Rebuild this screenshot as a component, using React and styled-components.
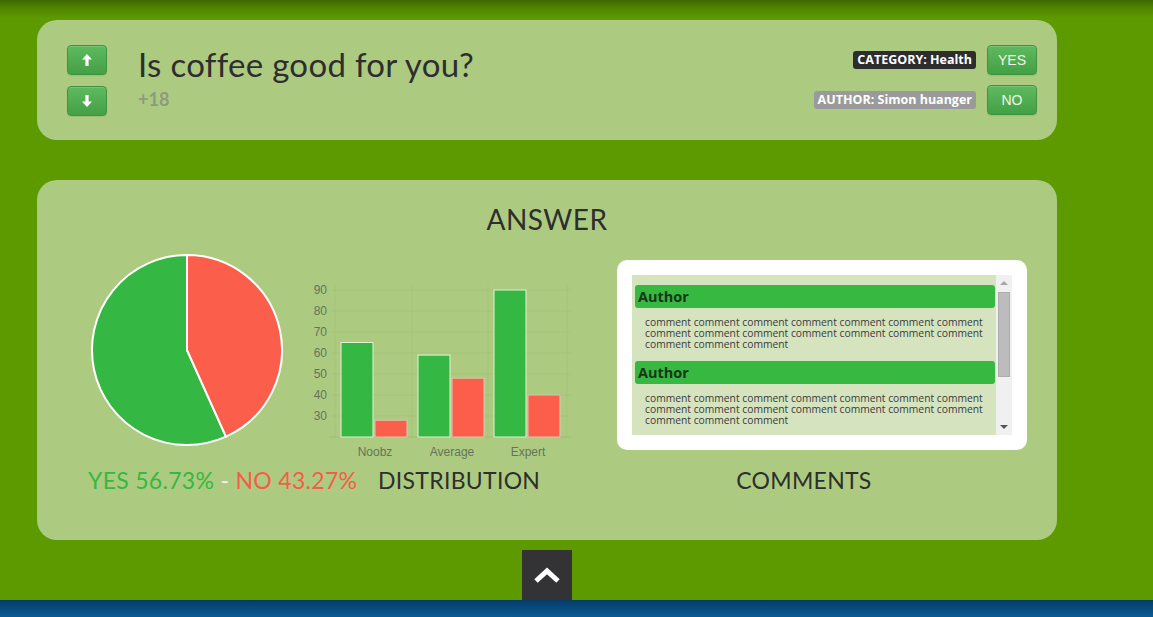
import React from 'react';
import styled, { createGlobalStyle } from 'styled-components';

const GlobalStyle = createGlobalStyle`
  html, body {
    margin: 0;
    padding: 0;
  }
  body {
    background: linear-gradient(#3e6600 0, #4f8400 8px, #5c9a00 18px, #5c9a00 100%);
    font-family: "Lato", "Open Sans", sans-serif;
    color: #333;
  }
`;

const Page = styled.div`
  display: flex;
  flex-direction: column;
  min-height: 617px;
`;

const Main = styled.div`
  width: 1020px;
  margin-left: 37px;
  padding-top: 20px;
  display: flex;
  flex-direction: column;
  gap: 40px;
`;

const Panel = styled.section`
  background: #adcb80;
  border-radius: 20px;
  box-sizing: border-box;
`;

const QuestionPanel = styled(Panel)`
  height: 120px;
  display: flex;
  align-items: flex-start;
  padding: 25px 20px 0 30px;
`;

const VoteColumn = styled.div`
  display: flex;
  flex-direction: column;
  gap: 11px;
`;

const GreenButton = styled.button`
  width: ${(p) => p.$w || 40}px;
  height: 30px;
  padding: 0;
  border: 1px solid #3f9340;
  border-radius: 4px;
  background: linear-gradient(#5fba5f, #44a044);
  box-shadow: inset 0 1px 0 rgba(255, 255, 255, 0.15), 0 1px 1px rgba(0, 0, 0, 0.08);
  color: #eef7e8;
  font-family: "Liberation Sans", Arial, sans-serif;
  font-size: 14px;
  display: flex;
  align-items: center;
  justify-content: center;
  cursor: pointer;
`;

const TitleBlock = styled.div`
  margin-left: 31px;
  flex: 1;
`;

const Title = styled.h1`
  margin: 0;
  margin-top: -1px;
  font-family: "Lato", sans-serif;
  font-weight: 400;
  font-size: 33px;
  line-height: 40px;
  color: #2e2e2e;
  letter-spacing: 0.3px;
`;

const Score = styled.div`
  margin-top: 4px;
  font-family: "Lato", sans-serif;
  font-weight: 700;
  font-size: 18px;
  color: #8c9b7c;
`;

const MetaColumn = styled.div`
  display: flex;
  flex-direction: column;
  align-items: flex-end;
  gap: 10px;
`;

const MetaRow = styled.div`
  display: flex;
  align-items: center;
  gap: 11px;
`;

const Label = styled.span`
  background: ${(p) => p.$bg};
  color: #fff;
  font-family: "Open Sans", sans-serif;
  font-weight: 700;
  font-size: 12.5px;
  line-height: 18px;
  padding: 0 4px;
  border-radius: 3px;
`;

const AnswerPanel = styled(Panel)`
  height: 360px;
  padding-top: 22px;
`;

const Heading = styled.h2`
  margin: 0;
  text-align: center;
  font-family: "Lato", sans-serif;
  font-weight: 400;
  font-size: 28px;
  line-height: 34px;
  color: #2e2e2e;
  letter-spacing: 0.5px;
`;

const ChartRow = styled.div`
  display: flex;
  align-items: flex-start;
  margin-top: 16px;
  padding-left: 52px;
`;

const PieWrap = styled.div`
  width: 196px;
  height: 196px;
`;

const BarWrap = styled.div`
  margin-left: 20px;
  margin-top: 28px;
`;

const CommentsCard = styled.div`
  margin-left: 40px;
  margin-top: 8px;
  width: 410px;
  height: 190px;
  box-sizing: border-box;
  padding: 15px;
  background: #fff;
  border-radius: 10px;
`;

const CommentsBox = styled.div`
  height: 160px;
  display: flex;
  background: #d6e3bf;
`;

const CommentList = styled.div`
  flex: 1;
  overflow: hidden;
  padding: 10px 1px 0 3px;
`;

const ScrollTrack = styled.div`
  width: 16px;
  background: #f0f0f0;
  display: flex;
  flex-direction: column;
  align-items: center;
`;

const ScrollArrow = styled.div`
  width: 0;
  height: 0;
  margin: ${(p) => (p.$down ? 'auto 0 6px' : '6px 0 0')};
  border-left: 4px solid transparent;
  border-right: 4px solid transparent;
  ${(p) => (p.$down ? 'border-top: 4px solid #555;' : 'border-bottom: 4px solid #a8a8a8;')}
`;

const ScrollThumb = styled.div`
  width: 12px;
  height: 85px;
  margin-top: 7px;
  background: #bcbcbc;
  border: 1px solid #adadad;
  box-sizing: border-box;
`;

const CommentItem = styled.div`
  margin-bottom: 11px;
`;

const AuthorBar = styled.div`
  height: 23px;
  line-height: 23px;
  background: #36b841;
  border-radius: 3px;
  padding-left: 3px;
  font-family: "Open Sans", sans-serif;
  font-weight: 700;
  font-size: 14.5px;
  color: #17361a;
`;

const CommentText = styled.p`
  margin: 9px 0 0 10px;
  width: 345px;
  font-family: "Open Sans", sans-serif;
  font-size: 10.3px;
  line-height: 11px;
  color: #3a3a3a;
`;

const CaptionRow = styled.div`
  display: flex;
  align-items: baseline;
  margin-top: 1px;
  font-family: "Lato", sans-serif;
  font-size: 23px;
  line-height: 28px;
`;

const Result = styled.span`
  margin-left: 51px;
  width: 290px;
  letter-spacing: 0.3px;
`;

const Yes = styled.span`
  color: #35b843;
`;

const No = styled.span`
  color: #f55c49;
`;

const Dash = styled.span`
  color: #f2f6ea;
`;

const Caption = styled.span`
  color: #2e2e2e;
  text-transform: uppercase;
  letter-spacing: 0.3px;
  margin-left: ${(p) => p.$ml}px;
`;

const ToTop = styled.button`
  align-self: flex-start;
  margin: 10px 0 0 522px;
  width: 50px;
  height: 50px;
  border: none;
  background: #333335;
  display: flex;
  align-items: center;
  justify-content: center;
  padding: 0;
`;

const Footer = styled.footer`
  margin-top: auto;
  height: 17px;
  background: linear-gradient(#053c68, #0a5a95);
`;

const Arrow = ({ down }) => (
  <svg width="10" height="12" viewBox="0 0 10 12">
    <g transform={down ? 'rotate(180 5 6)' : undefined} fill="#fff">
      <polygon points="5,0 10,5.5 6.6,5.5 6.6,12 3.4,12 3.4,5.5 0,5.5" />
    </g>
  </svg>
);

const PieChart = () => {
  const cx = 98;
  const cy = 98;
  const r = 95;
  const no = 0.4327;
  const end = -Math.PI / 2 + no * Math.PI * 2;
  const ex = cx + r * Math.cos(end);
  const ey = cy + r * Math.sin(end);
  return (
    <svg width="196" height="196" viewBox="0 0 196 196">
      <path
        d={`M${cx},${cy} L${ex},${ey} A${r},${r} 0 1 1 ${cx},${cy - r} Z`}
        fill="#35b843"
        stroke="#fff"
        strokeWidth="2"
      />
      <path
        d={`M${cx},${cy} L${cx},${cy - r} A${r},${r} 0 0 1 ${ex},${ey} Z`}
        fill="#fb5e4a"
        stroke="#fff"
        strokeWidth="2"
      />
    </svg>
  );
};

const bars = [
  { label: 'Noobz', yes: 65, no: 28, x: 36 },
  { label: 'Average', yes: 59, no: 48, x: 113 },
  { label: 'Expert', yes: 90, no: 40, x: 189 },
];

const BarChart = () => {
  const base = 157;
  const toY = (v) => base - (v - 20) * 2.1;
  const ticks = [30, 40, 50, 60, 70, 80, 90];
  return (
    <svg width="272" height="182" viewBox="0 0 272 182">
      {ticks.map((t) => (
        <g key={t}>
          <line x1="27" x2="266" y1={toY(t)} y2={toY(t)} stroke="rgba(0,0,0,0.04)" />
          <text
            x="22"
            y={toY(t) + 4}
            textAnchor="end"
            fontFamily="Liberation Sans, Arial, sans-serif"
            fontSize="12"
            fill="#65735a"
          >
            {t}
          </text>
        </g>
      ))}
      {[30, 107, 183, 262].map((x) => (
        <line key={x} x1={x} x2={x} y1="5" y2={base} stroke="rgba(0,0,0,0.04)" />
      ))}
      <line x1="24" x2="266" y1={base} y2={base} stroke="rgba(0,0,0,0.08)" />
      {bars.map((b) => (
        <g key={b.label}>
          <rect
            x={b.x}
            y={toY(b.yes)}
            width="32"
            height={base - toY(b.yes)}
            fill="#35b843"
            stroke="#e6f0d8"
            strokeWidth="1"
          />
          <rect
            x={b.x + 34}
            y={toY(b.no)}
            width="32"
            height={base - toY(b.no)}
            fill="#fb5e4a"
            stroke="#d8c8b0"
            strokeWidth="1"
          />
          <text
            x={b.x + 34}
            y="176"
            textAnchor="middle"
            fontFamily="Liberation Sans, Arial, sans-serif"
            fontSize="12"
            fill="#65735a"
          >
            {b.label}
          </text>
        </g>
      ))}
    </svg>
  );
};

const commentBody = Array(17).fill('comment').join(' ');

const App = () => {
  return (
    <>
      <GlobalStyle />
      <Page>
        <Main>
          <QuestionPanel>
            <VoteColumn>
              <GreenButton aria-label="vote up">
                <Arrow />
              </GreenButton>
              <GreenButton aria-label="vote down">
                <Arrow down />
              </GreenButton>
            </VoteColumn>
            <TitleBlock>
              <Title>Is coffee good for you?</Title>
              <Score>+18</Score>
            </TitleBlock>
            <MetaColumn>
              <MetaRow>
                <Label $bg="#2d2d2d">CATEGORY: Health</Label>
                <GreenButton $w={50}>YES</GreenButton>
              </MetaRow>
              <MetaRow>
                <Label $bg="#9a9a9a">AUTHOR: Simon huanger</Label>
                <GreenButton $w={50}>NO</GreenButton>
              </MetaRow>
            </MetaColumn>
          </QuestionPanel>

          <AnswerPanel>
            <Heading>ANSWER</Heading>
            <ChartRow>
              <PieWrap>
                <PieChart />
              </PieWrap>
              <BarWrap>
                <BarChart />
              </BarWrap>
              <CommentsCard>
                <CommentsBox>
                  <CommentList>
                    {[0, 1].map((i) => (
                      <CommentItem key={i}>
                        <AuthorBar>Author</AuthorBar>
                        <CommentText>{commentBody}</CommentText>
                      </CommentItem>
                    ))}
                  </CommentList>
                  <ScrollTrack>
                    <ScrollArrow />
                    <ScrollThumb />
                    <ScrollArrow $down />
                  </ScrollTrack>
                </CommentsBox>
              </CommentsCard>
            </ChartRow>
            <CaptionRow>
              <Result>
                <Yes>YES 56.73%</Yes> <Dash>-</Dash> <No>NO 43.27%</No>
              </Result>
              <Caption $ml={0}>Distribution</Caption>
              <Caption $ml={196}>Comments</Caption>
            </CaptionRow>
          </AnswerPanel>
        </Main>
        <ToTop aria-label="back to top">
          <svg width="28" height="18" viewBox="0 0 28 18">
            <polyline points="3,15 14,5 25,15" fill="none" stroke="#fff" strokeWidth="5" />
          </svg>
        </ToTop>
        <Footer />
      </Page>
    </>
  );
};

export default App;
